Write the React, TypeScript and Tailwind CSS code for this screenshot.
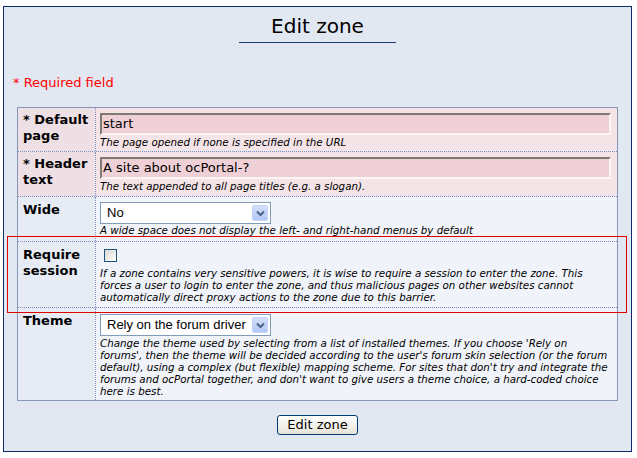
import React from "react";

const dv = { fontFamily: '"DejaVu Sans", Verdana, sans-serif' };
const lib = { fontFamily: '"Liberation Sans", Arial, sans-serif' };

function Chevron() {
  return (
    <div className="w-[16px] h-[16px] rounded-[2px] border border-[#c3d3fd] bg-gradient-to-b from-[#d3e0fd] to-[#b3c8f5] flex items-center justify-center">
      <svg width="9" height="7" viewBox="0 0 9 7">
        <path d="M1 1.5 L4.5 5 L8 1.5" fill="none" stroke="#4d6185" strokeWidth="2" />
      </svg>
    </div>
  );
}

function FakeSelect({ text }: { text: string }) {
  return (
    <div className="w-[171px] h-[22px] border border-[#7f9db9] bg-white flex items-center justify-between pl-[6px] pr-[2px]">
      <span className="text-[13px] leading-[16px] text-black" style={lib}>
        {text}
      </span>
      <Chevron />
    </div>
  );
}

function TextInput({ value }: { value: string }) {
  return (
    <div className="w-[511px] h-[22px] bg-[#f0d0d7] border-2 border-t-[#807b71] border-l-[#807b71] border-r-[#fbf6f2] border-b-[#fbf6f2] flex items-center pl-[1px]">
      <span className="text-[13px] leading-[16px] text-black" style={dv}>
        {value}
      </span>
    </div>
  );
}

function Desc({ lines }: { lines: string[] }) {
  return (
    <div className="text-[10.3px] leading-[12px] italic text-black" style={dv}>
      {lines.map((l, i) => (
        <div key={i} className="whitespace-nowrap">
          {l}
        </div>
      ))}
    </div>
  );
}

function Row({
  label,
  pink,
  h,
  last,
  labelPt,
  fieldPt,
  children,
}: {
  label: string[];
  pink?: boolean;
  h: string;
  last?: boolean;
  labelPt: string;
  fieldPt: string;
  children: React.ReactNode;
}) {
  return (
    <div
      className={
        "flex " +
        h +
        " " +
        (last ? "" : "border-b border-dotted border-[#7d91c0]")
      }
    >
      <div
        className={
          "w-[77px] shrink-0 pl-[5px] " +
          labelPt +
          " " +
          (pink ? "bg-[#eedfe5]" : "bg-[#e6ebf4]")
        }
      >
        <div className="text-[13px] leading-[16px] font-bold text-black" style={dv}>
          {label.map((l, i) => (
            <div key={i} className="whitespace-nowrap">
              {l}
            </div>
          ))}
        </div>
      </div>
      <div
        className={
          "flex-1 border-l border-dotted border-[#7d91c0] pl-[4px] " +
          fieldPt +
          " " +
          (pink ? "bg-[#f4e4e8]" : "bg-[#f0f3f9]")
        }
      >
        {children}
      </div>
    </div>
  );
}

export default function App() {
  return (
    <div className="w-[637px] h-[458px] bg-white pt-[6px] pl-[3px] relative overflow-hidden">
      <div className="w-[629px] h-[446px] border border-[#0d2b6b] bg-[#e1e8f1] flex flex-col">
        <div className="mt-[7px] mx-auto w-[157px] border-b border-[#1a3a7a] pb-[3px] text-center">
          <span className="text-[20px] leading-[24px] text-black" style={dv}>
            Edit zone
          </span>
        </div>
        <div className="mt-[32px] ml-[9px] text-[13px] leading-[16px] text-[#ff0000]" style={dv}>
          * Required field
        </div>
        <div className="mt-[16px] ml-[13px] w-[601px] border border-[#8696b8] flex flex-col">
          <Row label={["* Default", "page"]} pink h="h-[44px]" labelPt="pt-[4px]" fieldPt="pt-[5px]">
            <TextInput value="start" />
            <div className="mt-[1px]">
              <Desc lines={["The page opened if none is specified in the URL"]} />
            </div>
          </Row>
          <Row label={["* Header", "text"]} pink h="h-[45px]" labelPt="pt-[4px]" fieldPt="pt-[5px]">
            <TextInput value="A site about ocPortal-?" />
            <div className="mt-[1px]">
              <Desc lines={["The text appended to all page titles (e.g. a slogan)."]} />
            </div>
          </Row>
          <Row label={["Wide"]} h="h-[45px]" labelPt="pt-[5px]" fieldPt="pt-[5px]">
            <FakeSelect text="No" />
            <Desc lines={["A wide space does not display the left- and right-hand menus by default"]} />
          </Row>
          <Row label={["Require", "session"]} h="h-[66px]" labelPt="pt-[5px]" fieldPt="pt-[4px]">
            <div className="ml-[4px] mt-[3px] w-[13px] h-[13px] border border-[#1c5180] bg-gradient-to-br from-[#d8d8d2] to-white" />
            <div className="mt-[5px]">
              <Desc
                lines={[
                  "If a zone contains very sensitive powers, it is wise to require a session to enter the zone. This",
                  "forces a user to login to enter the zone, and thus malicious pages on other websites cannot",
                  "automatically direct proxy actions to the zone due to this barrier.",
                ]}
              />
            </div>
          </Row>
          <Row label={["Theme"]} h="h-[92px]" last labelPt="pt-[5px]" fieldPt="pt-[6px]">
            <FakeSelect text="Rely on the forum driver" />
            <div className="mt-[1px]">
              <Desc
                lines={[
                  "Change the theme used by selecting from a list of installed themes. If you choose 'Rely on",
                  "forums', then the theme will be decided according to the user's forum skin selection (or the forum",
                  "default), using a complex (but flexible) mapping scheme. For sites that don't try and integrate the",
                  "forums and ocPortal together, and don't want to give users a theme choice, a hard-coded choice",
                  "here is best.",
                ]}
              />
            </div>
          </Row>
        </div>
        <div className="mt-[14px] mx-auto">
          <button
            className="w-[81px] h-[20px] rounded-[3px] border border-[#003c74] bg-gradient-to-b from-white to-[#e6e3d6] text-[13px] leading-[16px] text-black flex items-center justify-center"
            style={dv}
          >
            Edit zone
          </button>
        </div>
      </div>
      <div className="absolute left-[7px] top-[236px] w-[620px] h-[77px] border border-[#e00000] pointer-events-none" />
    </div>
  );
}
